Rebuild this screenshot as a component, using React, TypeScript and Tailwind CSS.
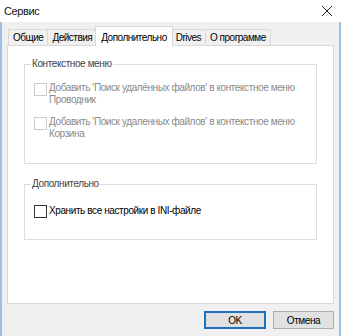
import React from 'react';

const tabs = ['Общие', 'Действия', 'Дополнительно', 'Drives', 'О программе'];

function Box({ disabled }: { disabled?: boolean }) {
  return (
    <span
      className={`mt-[1px] block h-[13px] w-[13px] shrink-0 border bg-white ${
        disabled ? 'border-[#cccccc]' : 'border-[#333333]'
      }`}
    />
  );
}

function Group({ title, children, className }: { title: string; children: React.ReactNode; className?: string }) {
  return (
    <div className={`relative border border-[#dcdcdc] ${className ?? ''}`}>
      <span className="absolute left-[6px] top-[-8px] bg-white px-[1px] leading-[14px] text-[#444]">{title}</span>
      {children}
    </div>
  );
}

export default function App() {
  return (
    <div
      className="flex h-[336px] w-[341px] flex-col text-[10px] tracking-[-0.4px] text-black"
      style={{ fontFamily: '"Liberation Sans", Arial, sans-serif' }}
    >
      <div className="flex h-[22px] items-center justify-between bg-white pl-[4px] pr-[6px]">
        <span className="text-[11px] tracking-[-0.4px] text-[#111]">Сервис</span>
        <svg width="12" height="12" viewBox="0 0 12 12" className="mr-[2px]">
          <path d="M1 1 L11 11 M11 1 L1 11" stroke="#222" strokeWidth="1" />
        </svg>
      </div>
      <div className="flex flex-1 flex-col border-x-[2px] border-[#9cc0e2] bg-[#f0f0f0] px-[5px] pt-[6px]">
        <div className="flex h-[17px] items-end pl-[1px] tracking-[-0.5px]">
          {tabs.map((t, i) =>
            i === 2 ? (
              <div
                key={t}
                className="relative z-10 -mb-[1px] ml-[-2px] mr-[-2px] flex h-[20px] items-start border border-b-0 border-[#d9d9d9] bg-white px-[5px] pt-[3px]"
              >
                {t}
              </div>
            ) : (
              <div
                key={t}
                className="flex h-[16px] items-center border border-b-0 border-[#d9d9d9] bg-[#f0f0f0] px-[4px] [&+&]:border-l-0"
              >
                {t}
              </div>
            )
          )}
        </div>
        <div className="flex h-[259px] flex-col border border-[#d9d9d9] bg-white px-[16px] pt-[18px]">
          <Group title="Контекстное меню" className="h-[100px] text-[#8a8a8a]">
            <div className="flex flex-col gap-[10px] pl-[9px] pt-[17px] pr-[2px]">
              <label className="flex gap-[2px] leading-[12px]">
                <Box disabled />
                <span>
                  Добавить 'Поиск удалённых файлов' в контекстное меню
                  <br />
                  Проводник
                </span>
              </label>
              <label className="flex gap-[2px] leading-[12px]">
                <Box disabled />
                <span>
                  Добавить 'Поиск удаленных файлов' в контекстное меню
                  <br />
                  Корзина
                </span>
              </label>
            </div>
          </Group>
          <Group title="Дополнительно" className="mt-[20px] h-[56px]">
            <div className="flex pl-[9px] pt-[19px]">
              <label className="flex gap-[2px] leading-[14px] text-black">
                <Box />
                <span>Хранить все настройки в INI-файле</span>
              </label>
            </div>
          </Group>
        </div>
        <div className="flex justify-end gap-[7px] pt-[7px]">
          <button className="flex h-[18px] w-[62px] items-center justify-center border-[2px] border-[#1f6fbf] bg-[#e1e1e1]">
            OK
          </button>
          <button className="flex h-[18px] w-[61px] items-center justify-center border border-[#adadad] bg-[#e1e1e1]">
            Отмена
          </button>
        </div>
      </div>
    </div>
  );
}
